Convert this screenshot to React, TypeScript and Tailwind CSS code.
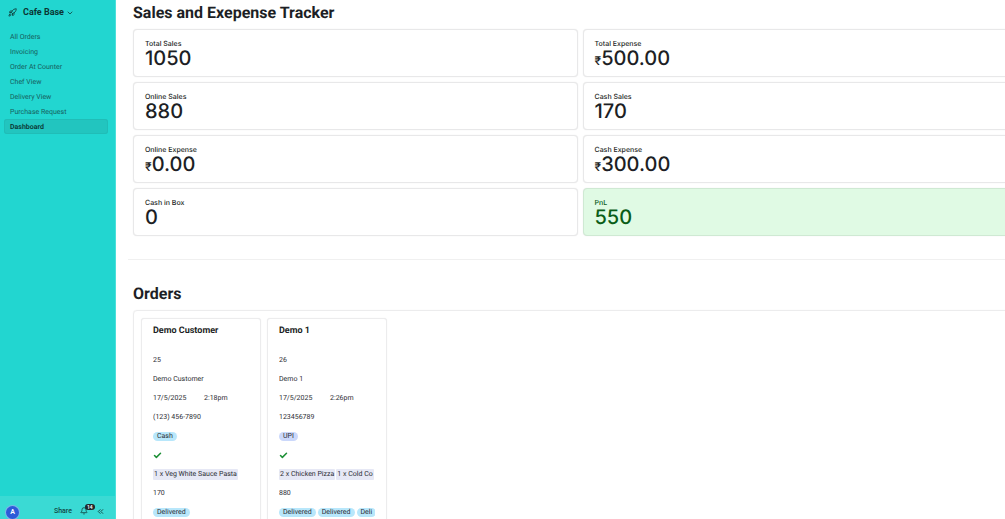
import { Bell, Check, ChevronDown, ChevronsLeft, Rocket } from 'lucide-react';
import clsx from 'clsx';

interface Stat {
  label: string;
  value: string;
  currency?: boolean;
  positive?: boolean;
}

interface Order {
  id: number;
  customer: string;
  date: string;
  time: string;
  phone: string;
  payment: 'Cash' | 'UPI';
  items: string[];
  total: number;
  statuses: string[];
}

const pages = [
  'All Orders',
  'Invoicing',
  'Order At Counter',
  'Chef View',
  'Delivery View',
  'Purchase Request',
  'Dashboard',
];

const stats: Stat[] = [
  { label: 'Total Sales', value: '1050' },
  { label: 'Total Expense', value: '500.00', currency: true },
  { label: 'Online Sales', value: '880' },
  { label: 'Cash Sales', value: '170' },
  { label: 'Online Expense', value: '0.00', currency: true },
  { label: 'Cash Expense', value: '300.00', currency: true },
  { label: 'Cash in Box', value: '0' },
  { label: 'PnL', value: '550', positive: true },
];

const orders: Order[] = [
  {
    id: 25,
    customer: 'Demo Customer',
    date: '17/5/2025',
    time: '2:18pm',
    phone: '(123) 456-7890',
    payment: 'Cash',
    items: ['1 x Veg White Sauce Pasta'],
    total: 170,
    statuses: ['Delivered'],
  },
  {
    id: 26,
    customer: 'Demo 1',
    date: '17/5/2025',
    time: '2:26pm',
    phone: '123456789',
    payment: 'UPI',
    items: ['2 x Chicken Pizza', '1 x Cold Co'],
    total: 880,
    statuses: ['Delivered', 'Delivered', 'Deli'],
  },
];

function Sidebar() {
  return (
    <aside className="flex w-[116px] shrink-0 flex-col border-r border-[#4be0da] bg-[#22d6d0]">
      <button className="flex h-[25px] items-center pl-2 text-[9px] font-bold text-[#124744]">
        <Rocket className="mr-1.5 size-[9px]" strokeWidth={2.5} />
        <span className="text-[#0b3533]">Cafe Base</span>
        <ChevronDown className="ml-0.5 size-2" strokeWidth={2.5} />
      </button>
      <nav className="mt-1 flex flex-col px-1">
        {pages.map((page) => (
          <a
            key={page}
            href="#"
            aria-current={page === 'Dashboard' ? 'page' : undefined}
            className={clsx(
              'mr-[3px] flex h-[15px] items-center rounded-[3px] px-1.5 pt-px text-[7px]',
              page === 'Dashboard'
                ? 'bg-[#22c5bf] font-semibold text-[#0b3533] ring-1 ring-[#20bdb7] ring-inset'
                : 'text-[#17605d]'
            )}
          >
            {page}
          </a>
        ))}
      </nav>
      <div className="mt-auto flex h-[23px] items-end bg-[#3adad4] px-1.5 text-[#124744]">
        <button className="flex size-[13px] items-center justify-center rounded-full bg-[#2d5bd8] text-[7px] font-semibold text-white ring-1 ring-[#7fb4ea]">
          A
        </button>
        <div className="ml-auto flex h-4 items-center pr-1">
          <button className="mr-2 text-[7px] font-medium">Share</button>
          <button className="relative mr-2" aria-label="Notifications">
            <Bell className="size-2" strokeWidth={2.5} />
            <span className="absolute -top-[3px] left-[5px] rounded-full bg-[#20272c] px-0.5 text-[5px] leading-[6px] font-semibold text-white">
              14
            </span>
          </button>
          <button aria-label="Collapse sidebar">
            <ChevronsLeft className="size-[9px]" strokeWidth={2.5} />
          </button>
        </div>
      </div>
    </aside>
  );
}

function StatCard({ stat }: { stat: Stat }) {
  return (
    <div
      className={clsx(
        "h-12 rounded-[4px] border pt-[9px] pl-[11px] font-['Inter','Liberation_Sans',sans-serif] shadow-[0_0_1px_rgba(0,0,0,0.12)]",
        stat.positive
          ? 'border-[#cfe9d3] bg-[#e0fae4] text-[#0a5d17]'
          : 'border-[#e8e8e9] bg-white text-[#1d1f25]'
      )}
    >
      <p className="text-[7px] leading-[9px] font-medium">{stat.label}</p>
      <p className="text-[20px] leading-5 font-medium">
        {stat.currency && <span className="text-[12px]">₹</span>}
        {stat.value}
      </p>
    </div>
  );
}

function OrderCard({ order }: { order: Order }) {
  return (
    <article className="w-[120px] shrink-0 rounded-[3px] border border-[#ececed] bg-white px-[11px] pt-1 text-[7px] text-[#2b2d33] shadow-[0_0_1px_rgba(0,0,0,0.1)]">
      <h3 className="text-[9px] leading-4 font-bold text-[#1d1f25]">{order.customer}</h3>
      <div className="mt-3 flex flex-col overflow-hidden whitespace-nowrap *:flex *:h-[19px] *:shrink-0 *:items-center">
        <p>{order.id}</p>
        <p>{order.customer}</p>
        <p>
          <span className="w-[51px]">{order.date}</span>
          <span>{order.time}</span>
        </p>
        <p>{order.phone}</p>
        <p>
          <span
            className={clsx(
              'rounded-full px-1 leading-[9px]',
              order.payment === 'Cash' ? 'bg-[#b8e7fb]' : 'bg-[#cbd8fb]'
            )}
          >
            {order.payment}
          </span>
        </p>
        <p>
          <Check className="size-[9px] text-[#1c8f35]" strokeWidth={4} aria-label="Paid" />
        </p>
        <p className="gap-px">
          {order.items.map((item) => (
            <span key={item} className="rounded-[1px] bg-[#e6e8f5] px-px leading-[11px]">
              {item}
            </span>
          ))}
        </p>
        <p>{order.total}</p>
        <p className="gap-0.5">
          {order.statuses.map((status, i) => (
            <span key={i} className="rounded-full bg-[#b8e7fb] px-1 leading-[9px]">
              {status}
            </span>
          ))}
        </p>
      </div>
    </article>
  );
}

export default function App() {
  return (
    <div className="flex h-screen overflow-hidden bg-white font-['Roboto','Liberation_Sans',sans-serif] [text-rendering:geometricPrecision]">
      <Sidebar />
      <main className="min-w-0 flex-1 overflow-hidden pl-3">
        <section className="-mr-[22px] pl-[5px]">
          <h1 className="pt-[3px] text-[16px] leading-5 font-bold text-[#1d1f25]">
            Sales and Exepense Tracker
          </h1>
          <div className="mt-1.5 grid grid-cols-2 gap-[5px]">
            {stats.map((stat) => (
              <StatCard key={stat.label} stat={stat} />
            ))}
          </div>
        </section>

        <hr className="mt-[23px] border-[#f0f0f0]" />

        <section className="-mr-[22px] pl-[5px]">
          <h2 className="pt-6 text-[16px] leading-5 font-bold text-[#1d1f25]">Orders</h2>
          <div className="mt-1.5 flex gap-1.5 rounded-[4px] border border-[#ececed] p-[7px] shadow-[0_0_1px_rgba(0,0,0,0.1)]">
            {orders.map((order) => (
              <OrderCard key={order.id} order={order} />
            ))}
          </div>
        </section>
      </main>
    </div>
  );
}
